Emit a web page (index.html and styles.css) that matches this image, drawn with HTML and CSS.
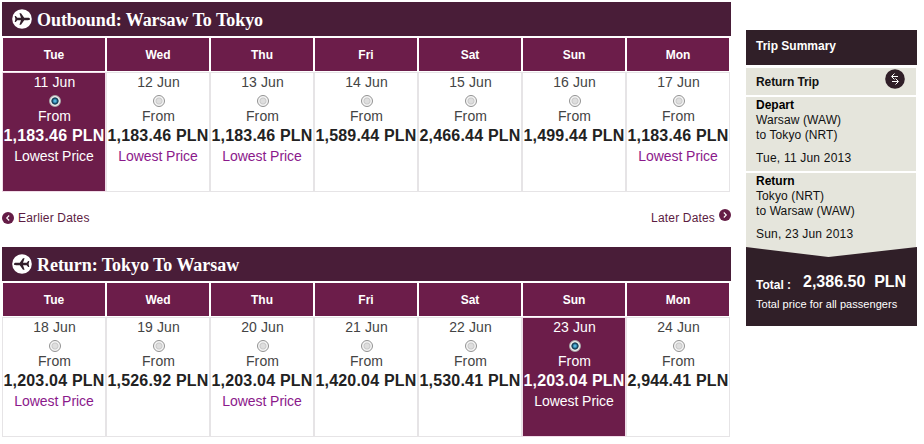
FILE: index.html
```html
<!DOCTYPE html>
<html lang="en">
<head>
<meta charset="utf-8">
<title>Select flights</title>
<link rel="stylesheet" href="styles.css">
</head>
<body>
<svg class="defs" aria-hidden="true">
  <symbol id="plane" viewBox="0 0 20 20">
    <circle cx="10" cy="10" r="9.8" fill="#fff"/>
    <path fill="#321e2b" d="M18 10c0-.8-.9-1.2-2-1.2h-3.8L9 4.3H7.4L9 8.8H5.3L3.8 6.9H2.7L3.4 10l-.7 3.1h1.1l1.5-1.9H9l-1.6 4.5H9l3.2-4.5H16c1.1 0 2-.4 2-1.2z"/>
  </symbol>
  <symbol id="arrow" viewBox="0 0 12 12">
    <circle cx="6" cy="6" r="6" fill="#641c46"/>
    <path d="M4.8 3.5 7.3 6 4.8 8.5" fill="none" stroke="#fff" stroke-width="1.1"/>
  </symbol>
</svg>
<div class="page">
  <main class="flights" id="flights"></main>
  <aside class="summary">
    <h2 class="summary-title">Trip Summary</h2>
    <div class="trip-type"><span>Return Trip</span>
      <svg class="swap" viewBox="0 0 20 20"><circle cx="10" cy="10" r="9.8" fill="#301f28"/><path d="M13 7.5H7M9.5 4.5l-3 3 3 3M7 12.5h6M10.5 9.5l3 3-3 3" fill="none" stroke="#fff"/></svg>
    </div>
    <div class="leg"><b>Depart</b><span>Warsaw (WAW)</span><span>to Tokyo (NRT)</span><span class="when">Tue, 11 Jun 2013</span></div>
    <div class="leg"><b>Return</b><span>Tokyo (NRT)</span><span>to Warsaw (WAW)</span><span class="when">Sun, 23 Jun 2013</span></div>
    <div class="total">
      <svg class="notch" viewBox="0 0 170 10" preserveAspectRatio="none"><path d="M0 0H170L82 10Z" fill="#e5e5dc"/></svg>
      <div class="total-line"><span class="total-label">Total :</span><span class="amount">2,386.50&nbsp; PLN</span></div>
      <div class="note">Total price for all passengers</div>
    </div>
  </aside>
</div>
<script src="script.js"></script>
</body>
</html>
```
FILE: styles.css
```css
* { box-sizing: border-box; }
body { margin: 0; background: #fff; font-family: "Liberation Sans", Arial, sans-serif; }
.defs { display: none; }
.page { display: flex; align-items: flex-start; padding: 2px 0 0 2px; }
.flights { width: 729px; }
.board-title { display: flex; align-items: center; height: 34px; margin: 0; padding-left: 10px; gap: 5px; background: #491d38; color: #fff; font: bold 18px "Liberation Serif", Georgia, serif; }
.board-title svg { width: 20px; height: 20px; }
.board-title span { display: block; white-space: nowrap; padding-top: 2px; letter-spacing: -.05px; }
.week { display: grid; grid-template-columns: repeat(7, 104px); }
.day { height: 33px; margin: 2px 1px 1px; background: #6c1d4a; color: #fff; font-size: 12px; font-weight: bold; line-height: 34px; text-align: center; }
.fare { display: flex; flex-direction: column; align-items: center; height: 120px; border: 1px solid #e6e4e6; color: #444; font-size: 14px; white-space: nowrap; }
.date { line-height: 18px; letter-spacing: .1px; padding-left: 1px; }
.radio { width: 12px; height: 12px; margin: 4px 0 0 2px; border: 1px solid #929292; border-radius: 50%; background: radial-gradient(circle, #dedede 0 2px, #c9c9c9 3px, #f5f5f5 4px); }
.from { line-height: 16px; margin-top: 1px; letter-spacing: .1px; padding-left: 1px; }
.price { color: #222; font-size: 16px; font-weight: bold; line-height: 20px; letter-spacing: .2px; margin-top: 2px; }
.lowest { color: #8b198b; line-height: 18px; margin-top: 1px; letter-spacing: -.05px; }
.selected { background: #6c1d4a; border-color: #f0dce8; color: #fff; }
.selected .price, .selected .lowest { color: #fff; }
.selected .radio { border-color: #aaa; background: radial-gradient(circle, #55b5dc 0 1px, #15506f 2.5px, #17384d 3.2px, #eee 4px); }
.dates { display: flex; justify-content: space-between; height: 55px; padding-top: 16px; color: #5c1c42; font-size: 12px; line-height: 20px; }
.dates span { display: flex; gap: 4px; letter-spacing: .17px; }
.dates svg { width: 12px; height: 12px; margin-top: 4px; }
.dates .later svg { margin-top: 1px; }
.flip { transform: scaleX(-1); }
.summary { width: 171px; margin: 28px 0 0 15px; font-size: 12px; color: #111; }
.summary-title { height: 35px; margin: 0 0 3px; padding-left: 10px; background: #301f28; color: #fff; font-size: 12px; line-height: 33px; }
.trip-type { display: flex; justify-content: space-between; width: 170px; height: 27px; padding: 0 11px 0 10px; background: #e5e5dc; font-weight: bold; line-height: 28px; }
.trip-type span { letter-spacing: -.08px; }
.swap { width: 20px; height: 20px; margin-top: 1px; }
.leg { display: flex; flex-direction: column; width: 170px; height: 74px; margin-top: 2px; padding: 1px 10px 0; background: #e5e5dc; line-height: 15px; letter-spacing: .1px; }
.leg .when { margin-top: 8px; letter-spacing: .2px; }
.leg b { color: #000; letter-spacing: 0; }
.total { height: 79px; width: 171px; background: #301f28; color: #fff; font-weight: bold; }
.notch { display: block; width: 171px; height: 10px; }
.total-line { display: flex; align-items: flex-start; height: 38px; padding: 15px 0 0 10px; white-space: nowrap; }
.total-label { width: 47px; padding-top: 3px; line-height: 20px; }
.amount { font-size: 16px; line-height: 20px; }
.note { padding-left: 10px; font-size: 11px; font-weight: normal; line-height: 18px; letter-spacing: .04px; white-space: nowrap; }
```
FILE: script.js
```js
const boards = [
  { kind: 'outbound', title: 'Outbound: Warsaw To Tokyo', first: 11, selected: 0,
    fares: ['1,183.46', '1,183.46', '1,183.46', '1,589.44', '2,466.44', '1,499.44', '1,183.46'], lowest: [0, 1, 2, 6] },
  { kind: 'return', title: 'Return: Tokyo To Warsaw', first: 18, selected: 5,
    fares: ['1,203.04', '1,526.92', '1,203.04', '1,420.04', '1,530.41', '1,203.04', '2,944.41'], lowest: [0, 2, 5] }
];
const days = ['Tue', 'Wed', 'Thu', 'Fri', 'Sat', 'Sun', 'Mon'];
const render = b => `<section>
  <h1 class="board-title ${b.kind}"><svg class="${b.kind === 'return' ? 'flip' : ''}"><use href="#plane"/></svg><span>${b.title}</span></h1>
  <div class="week">${days.map(d => `<div class="day">${d}</div>`).join('')}
  ${b.fares.map((f, i) => `<div class="fare ${i === b.selected ? 'selected' : ''}"><span class="date">${b.first + i} Jun</span><i class="radio"></i><span class="from">From</span><span class="price">${f} PLN</span>${b.lowest.includes(i) ? '<span class="lowest">Lowest Price</span>' : ''}</div>`).join('')}
  </div></section>`;
const nav = `<nav class="dates"><span><svg class="flip"><use href="#arrow"/></svg>Earlier Dates</span><span class="later">Later Dates<svg><use href="#arrow"/></svg></span></nav>`;
document.getElementById('flights').innerHTML = render(boards[0]) + nav + render(boards[1]);
```
